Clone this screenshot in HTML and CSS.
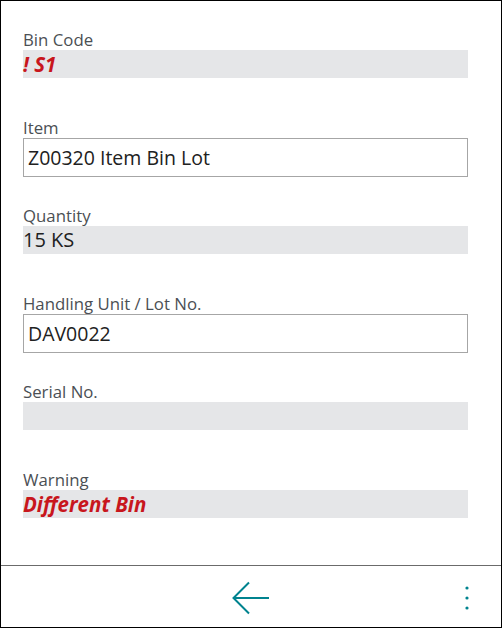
FILE: index.html
```html
<!DOCTYPE html>
<html>
<head>
<meta charset="utf-8">
<link rel="stylesheet" href="styles.css">
</head>
<body>
<div class="frame">
  <main class="form">
    <div class="field">
      <div class="label">Bin Code</div>
      <div class="ro warn">! S1</div>
    </div>
    <div class="field">
      <div class="label">Item</div>
      <div class="input">Z00320 Item Bin Lot</div>
    </div>
    <div class="field">
      <div class="label">Quantity</div>
      <div class="ro">15 KS</div>
    </div>
    <div class="field">
      <div class="label">Handling Unit / Lot No.</div>
      <div class="input">DAV0022</div>
    </div>
    <div class="field">
      <div class="label">Serial No.</div>
      <div class="ro"></div>
    </div>
    <div class="field">
      <div class="label">Warning</div>
      <div class="ro warn">Different Bin</div>
    </div>
  </main>
  <footer class="bar">
    <span></span>
    <svg class="back" width="38" height="34" viewBox="0 0 38 34">
      <path d="M1.5 17 H37 M17 1.5 L1.5 17 L17 32.5" fill="none" stroke="#00838f" stroke-width="2"/>
    </svg>
    <svg class="more" width="6" height="26" viewBox="0 0 6 26">
      <circle cx="3" cy="3" r="1.6" fill="#00838f"/>
      <circle cx="3" cy="13" r="1.6" fill="#00838f"/>
      <circle cx="3" cy="23" r="1.6" fill="#00838f"/>
    </svg>
  </footer>
</div>
</body>
</html>
```

FILE: styles.css
```css
html, body {
  margin: 0;
  padding: 0;
  background: #fff;
}
.frame {
  width: 502px;
  height: 628px;
  box-sizing: border-box;
  border: 1px solid #000;
  display: flex;
  flex-direction: column;
  font-family: "Open Sans", "Noto Sans", sans-serif;
}
.form {
  flex: 1;
  padding: 29px 33px 0 22px;
  display: flex;
  flex-direction: column;
}
.field {
  height: 88px;
  display: flex;
  flex-direction: column;
}
.label {
  height: 20px;
  line-height: 20px;
  font-size: 16.8px;
  color: #4b4f54;
}
.ro {
  height: 28px;
  line-height: 28px;
  background: #e5e6e8;
  font-size: 20px;
  color: #212121;
}
.ro.warn {
  color: #c8161d;
  font-weight: 700;
  font-style: italic;
  font-size: 20.5px;
}
.input {
  height: 39px;
  box-sizing: border-box;
  border: 1px solid #a6a6a6;
  line-height: 37px;
  padding-left: 4px;
  font-size: 19.5px;
  color: #212121;
}
.bar {
  height: 62px;
  box-sizing: border-box;
  border-top: 1px solid #6b6b6b;
  display: grid;
  grid-template-columns: 1fr auto 1fr;
  align-items: center;
}
.back {
  display: block;
  margin-top: 2px;
}
.more {
  justify-self: end;
  margin-right: 31px;
  margin-top: 2px;
}
```
